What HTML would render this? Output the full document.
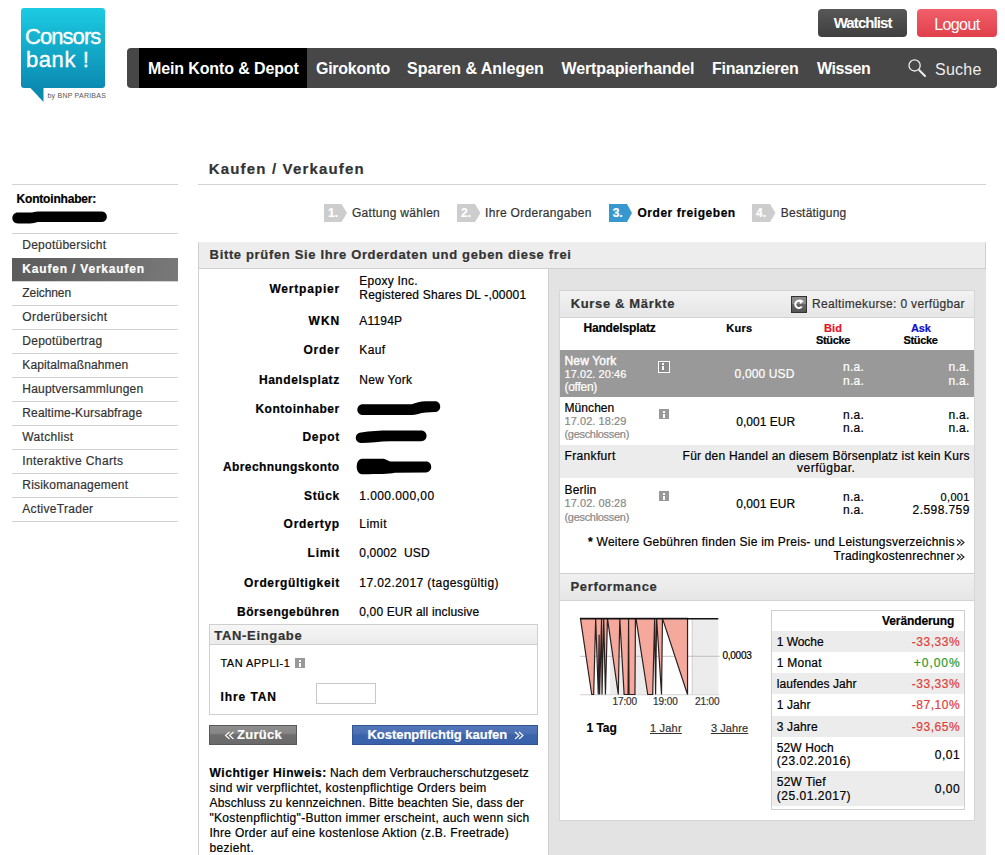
<!DOCTYPE html>
<html><head><meta charset="utf-8"><title>Consorsbank</title>
<style>

html,body{margin:0;padding:0;}
body{width:1005px;height:855px;overflow:hidden;position:relative;background:#fff;font-family:"Liberation Sans",sans-serif;color:#000;}
.t{position:absolute;white-space:nowrap;line-height:1;-webkit-text-stroke:0.2px currentColor;}
.a{position:absolute;}
.ln{position:absolute;height:1px;background:#d3d3d3;}
.badge{position:absolute;top:204px;height:18px;}

</style></head><body>

<!-- logo -->
<div class="a" style="left:21px;top:8px;width:84px;height:80px;border-radius:3px;background:linear-gradient(#1ccbe2,#0b8ab2);"></div>
<svg class="a" style="left:0;top:0" width="120" height="110"><polygon points="30,87.5 43.5,87.5 43.5,102" fill="#0a8ab0"/></svg>

<!-- top buttons -->
<div class="a" style="left:818px;top:9px;width:89px;height:28px;border-radius:4px;background:linear-gradient(#575757,#3f3f3f);"></div>
<div class="a" style="left:917px;top:9px;width:80px;height:28px;border-radius:4px;background:linear-gradient(#f0606a,#e13f4b);"></div>

<!-- nav -->
<div class="a" style="left:127px;top:48px;width:870px;height:40px;border-radius:4px;background:#474747;"></div>
<div class="a" style="left:139px;top:48px;width:168px;height:40px;background:#000;"></div>
<svg class="a" style="left:900px;top:55px" width="30" height="26"><circle cx="14.6" cy="10.4" r="5.6" fill="none" stroke="#eee" stroke-width="1.3"/><line x1="19.3" y1="15.2" x2="25" y2="21" stroke="#eee" stroke-width="2" stroke-linecap="round"/></svg>

<!-- sidebar -->
<div class="ln" style="left:12px;top:184px;width:166px;"></div>
<svg class="a" style="left:0;top:0" width="120" height="240"><path d="M18,212.5 L32,212.5 C35,211.5 37,211.5 40,211.5 L102,211.5 C108.5,211.5 108.5,222 102,222 L38,222 C35,222.5 33,223.4 30,223.4 L18,223.4 C10.5,223.4 10.5,212.5 18,212.5 Z" fill="#000"/></svg>
<div class="ln" style="left:12px;top:233px;width:166px;"></div>
<div class="a" style="left:12px;top:258px;width:166px;height:23px;background:linear-gradient(100deg,#5b5b5b,#797979);"></div>
<div class="ln" style="left:12px;top:281px;width:166px;"></div><div class="ln" style="left:12px;top:305px;width:166px;"></div><div class="ln" style="left:12px;top:329px;width:166px;"></div><div class="ln" style="left:12px;top:353px;width:166px;"></div><div class="ln" style="left:12px;top:377px;width:166px;"></div><div class="ln" style="left:12px;top:401px;width:166px;"></div><div class="ln" style="left:12px;top:425px;width:166px;"></div><div class="ln" style="left:12px;top:449px;width:166px;"></div><div class="ln" style="left:12px;top:473px;width:166px;"></div><div class="ln" style="left:12px;top:497px;width:166px;"></div><div class="ln" style="left:12px;top:521px;width:166px;"></div>

<!-- main header -->
<div class="ln" style="left:198px;top:184px;width:788px;"></div>

<!-- steps -->
<svg class="a" style="left:0;top:0" width="1005" height="240">
<polygon points="324,204 341.5,204 347,213 341.5,222 324,222" fill="#cdcdcd"/>
<polygon points="457,204 475,204 480.5,213 475,222 457,222" fill="#cdcdcd"/>
<polygon points="609,204 627,204 632,213 627,222 609,222" fill="#3797cf"/>
<polygon points="752,204 770,204 775.5,213 770,222 752,222" fill="#cdcdcd"/>
</svg>

<!-- main box -->
<div class="a" style="left:198px;top:242px;width:786px;height:700px;border:1px solid #cfcfcf;border-top-color:#e4e4e4;background:#fff;"></div>
<div class="a" style="left:199px;top:242px;width:786px;height:26px;background:#ededed;border-bottom:1px solid #cfcfcf;"></div>
<div class="a" style="left:548px;top:269px;width:437px;height:600px;background:#e3e3e3;border-left:1px solid #cfcfcf;"></div>

<!-- Kurse panel -->
<div class="a" style="left:559px;top:290px;width:414px;height:529px;border:1px solid #d6d6d6;background:#fff;"></div>
<div class="a" style="left:560px;top:291px;width:414px;height:26px;background:linear-gradient(#f2f2f2,#e6e6e6);border-bottom:1px solid #d3d3d3;"></div>
<div class="a" style="left:560px;top:350px;width:414px;height:47px;background:#999;"></div>
<div class="a" style="left:560px;top:445px;width:414px;height:33px;background:#ececec;"></div>
<!-- performance header -->
<div class="a" style="left:560px;top:573px;width:414px;height:26px;background:linear-gradient(#f0f0f0,#e6e6e6);border-top:1px solid #cfcfcf;border-bottom:1px solid #d3d3d3;"></div>

<!-- refresh icon -->
<div class="a" style="left:791px;top:296px;width:14px;height:15px;border:1px solid #333;background:linear-gradient(#8a8a8a 0%,#8a8a8a 45%,#666 46%,#555 100%);"></div>
<svg class="a" style="left:791px;top:296px" width="16" height="17"><path d="M10.8,10.5 A3.6,3.6 0 1 1 10.2,5.6" fill="none" stroke="#fff" stroke-width="2"/><polygon points="8.5,3 12.8,5.2 9,8" fill="#fff"/></svg>

<!-- info icons -->
<div class="a" style="left:658px;top:361px;width:10px;height:10px;border:1px solid #fff;background:#8c8c8c;"></div>
<div class="a" style="left:662px;top:363px;width:2px;height:2px;background:#fff;"></div>
<div class="a" style="left:662px;top:366px;width:2px;height:4px;background:#fff;"></div>
<div class="a" style="left:659px;top:409px;width:10px;height:10px;background:#999;"></div>
<div class="a" style="left:663px;top:411px;width:2px;height:2px;background:#fff;"></div>
<div class="a" style="left:663px;top:414px;width:2px;height:4px;background:#fff;"></div>
<div class="a" style="left:659px;top:491px;width:10px;height:10px;background:#999;"></div>
<div class="a" style="left:663px;top:493px;width:2px;height:2px;background:#fff;"></div>
<div class="a" style="left:663px;top:496px;width:2px;height:4px;background:#fff;"></div>

<!-- chart -->
<svg class="a" style="left:575px;top:612px" width="150" height="88" viewBox="0 0 1005 590" preserveAspectRatio="none">
<rect x="235" y="45" width="295" height="505" fill="#ececec"/>
<rect x="785" y="45" width="175" height="505" fill="#ececec"/>
<line x1="785" y1="45" x2="785" y2="555" stroke="#c8c8c8" stroke-width="6"/>
<line x1="35" y1="297" x2="970" y2="297" stroke="#bbb" stroke-width="6"/>
<line x1="35" y1="555" x2="965" y2="555" stroke="#ccc" stroke-width="6"/>
<polygon points="36.5,43 112,553 125,553 138.5,43 156,553 161.6,152 165,553 178,43 181,553 192.5,43 204,553 217.5,43 290,553 300,43 329,553 355.6,553 359,43 362,553 401.7,553 405,43 408.6,43 487.5,553 520.4,553 533.6,43 540,553 546.8,43 579.7,553 586,43 754,553 754,43" fill="#f5a99c" stroke="#2a2020" stroke-width="8" stroke-linejoin="miter"/>
<line x1="35" y1="45" x2="960" y2="45" stroke="#111" stroke-width="10"/>
</svg>

<!-- Veraenderung table -->
<div class="a" style="left:771px;top:610px;width:192px;height:198px;border:1px solid #cfcfcf;background:#fff;"></div>
<div class="a" style="left:772px;top:631px;width:192px;height:21px;background:#ececec;"></div>
<div class="a" style="left:772px;top:673px;width:192px;height:21px;background:#ececec;"></div>
<div class="a" style="left:772px;top:716px;width:192px;height:21px;background:#ececec;"></div>
<div class="a" style="left:772px;top:771px;width:192px;height:35px;background:#ececec;"></div>

<!-- redaction blobs -->
<svg class="a" style="left:350px;top:398px" width="100" height="80">
<path d="M13,6.3 L61.6,6.3 C66,5 70,3.3 76,3.3 L85,3.3 C92,3.3 92,14.1 85,14.1 L76,14.5 C70,15 66,17.1 61.6,17.1 L13,17.1 C5.5,17.1 5.5,6.3 13,6.3 Z" fill="#000"/>
<path d="M11,34.6 C20,33 30,32.6 40,32.6 L71,32.6 C78.5,32.6 78.5,43.3 71,43.3 L40,43.3 C30,43.3 20,45.1 11,45.1 C4,45.1 4,34.6 11,34.6 Z" fill="#000"/>
<path d="M12,60.7 L32,60.7 C37,60.7 38,63.6 42,63.6 L76,63.6 C83,63.6 83,74.4 76,74.4 L45,74.8 C38,76 30,76.2 12,76.2 C5,76.2 5,60.7 12,60.7 Z" fill="#000"/>
</svg>
<!-- TAN box -->
<div class="a" style="left:209px;top:624px;width:327px;height:89px;border:1px solid #cfcfcf;background:#fff;"></div>
<div class="a" style="left:210px;top:625px;width:327px;height:19px;background:linear-gradient(#f6f6f6,#ebebeb);border-bottom:1px solid #cfcfcf;"></div>
<div class="a" style="left:295px;top:658px;width:10px;height:10px;background:#999;"></div>
<div class="a" style="left:299px;top:660px;width:2px;height:2px;background:#fff;"></div>
<div class="a" style="left:299px;top:663px;width:2px;height:4px;background:#fff;"></div>
<div class="a" style="left:316px;top:683px;width:58px;height:19px;border:1px solid #c8c8c8;background:#fff;"></div>

<!-- buttons -->
<div class="a" style="left:209px;top:725px;width:86px;height:18px;border:1px solid #585858;background:linear-gradient(#8e8e8e 0%,#868686 40%,#6d6d6d 50%,#6a6a6a 100%);"></div>
<div class="a" style="left:352px;top:725px;width:184px;height:18px;border:1px solid #2f5597;background:linear-gradient(#5276b8 0%,#4c70b3 40%,#3b63ab 50%,#3a62aa 100%);"></div>
<svg class="a" style="left:0;top:0" width="1005" height="855">
<g fill="none" stroke="#fff" stroke-width="1.1">
<polyline points="229.5,732 225.5,735.5 229.5,739"/><polyline points="233.5,732 229.5,735.5 233.5,739"/>
<polyline points="515,732 519,735.5 515,739"/><polyline points="519,732 523,735.5 519,739"/>
</g>
<g fill="none" stroke="#222" stroke-width="1.1">
<polyline points="957,539.5 960.5,542.5 957,545.5"/><polyline points="960.5,539.5 964,542.5 960.5,545.5"/>
<polyline points="957,554 960.5,557 957,560"/><polyline points="960.5,554 964,557 960.5,560"/>
</g>
</svg>

<span id="t0" class="t" style="left:25.00px;top:26.00px;font-size:22px;color:#fff;letter-spacing:-0.937px;-webkit-text-stroke:0.35px #fff;">Consors</span>
<span id="t1" class="t" style="left:26.00px;top:49.00px;font-size:22px;color:#fff;letter-spacing:0.572px;-webkit-text-stroke:0.35px #fff;">bank !</span>
<span id="t2" class="t" style="left:47.50px;top:92.00px;font-size:7px;color:#555;letter-spacing:0.225px;-webkit-text-stroke:0;">by BNP PARIBAS</span>
<span id="t3" class="t" style="left:833.70px;top:15.00px;font-size:15px;font-weight:700;color:#fff;letter-spacing:-0.916px;-webkit-text-stroke:0;">Watchlist</span>
<span id="t4" class="t" style="left:934.30px;top:17.00px;font-size:16px;color:#fff;letter-spacing:-0.628px;-webkit-text-stroke:0;">Logout</span>
<span id="t5" class="t" style="left:148.00px;top:60.50px;font-size:16px;font-weight:700;color:#fff;letter-spacing:-0.122px;-webkit-text-stroke:0;">Mein Konto &amp; Depot</span>
<span id="t6" class="t" style="left:316.00px;top:60.50px;font-size:16px;font-weight:700;color:#fff;letter-spacing:-0.267px;-webkit-text-stroke:0;">Girokonto</span>
<span id="t7" class="t" style="left:407.00px;top:60.50px;font-size:16px;font-weight:700;color:#fff;letter-spacing:-0.028px;-webkit-text-stroke:0;">Sparen &amp; Anlegen</span>
<span id="t8" class="t" style="left:561.60px;top:60.50px;font-size:16px;font-weight:700;color:#fff;letter-spacing:-0.136px;-webkit-text-stroke:0;">Wertpapierhandel</span>
<span id="t9" class="t" style="left:712.00px;top:60.50px;font-size:16px;font-weight:700;color:#fff;letter-spacing:-0.211px;-webkit-text-stroke:0;">Finanzieren</span>
<span id="t10" class="t" style="left:817.00px;top:60.50px;font-size:16px;font-weight:700;color:#fff;letter-spacing:-0.415px;-webkit-text-stroke:0;">Wissen</span>
<span id="t11" class="t" style="left:935.00px;top:62.00px;font-size:16px;color:#eee;letter-spacing:0.231px;-webkit-text-stroke:0;">Suche</span>
<span id="t12" class="t" style="left:16.50px;top:193.00px;font-size:12px;font-weight:700;letter-spacing:-0.183px;">Kontoinhaber:</span>
<span id="t13" class="t" style="left:22.30px;top:239.00px;font-size:12px;color:#333;letter-spacing:0.237px;">Depotübersicht</span>
<span id="t14" class="t" style="left:22.30px;top:263.00px;font-size:12px;font-weight:700;color:#fff;letter-spacing:0.809px;">Kaufen / Verkaufen</span>
<span id="t15" class="t" style="left:22.30px;top:287.00px;font-size:12px;color:#333;letter-spacing:-0.082px;">Zeichnen</span>
<span id="t16" class="t" style="left:22.30px;top:311.00px;font-size:12px;color:#333;letter-spacing:0.417px;">Orderübersicht</span>
<span id="t17" class="t" style="left:22.30px;top:335.00px;font-size:12px;color:#333;letter-spacing:0.257px;">Depotübertrag</span>
<span id="t18" class="t" style="left:22.30px;top:359.00px;font-size:12px;color:#333;letter-spacing:0.116px;">Kapitalmaßnahmen</span>
<span id="t19" class="t" style="left:22.30px;top:383.00px;font-size:12px;color:#333;letter-spacing:0.200px;">Hauptversammlungen</span>
<span id="t20" class="t" style="left:22.30px;top:407.00px;font-size:12px;color:#333;letter-spacing:0.162px;">Realtime-Kursabfrage</span>
<span id="t21" class="t" style="left:22.30px;top:431.00px;font-size:12px;color:#333;letter-spacing:0.321px;">Watchlist</span>
<span id="t22" class="t" style="left:22.30px;top:455.00px;font-size:12px;color:#333;letter-spacing:0.397px;">Interaktive Charts</span>
<span id="t23" class="t" style="left:22.30px;top:479.00px;font-size:12px;color:#333;letter-spacing:0.205px;">Risikomanagement</span>
<span id="t24" class="t" style="left:22.30px;top:503.00px;font-size:12px;color:#333;letter-spacing:0.293px;">ActiveTrader</span>
<span id="t25" class="t" style="left:208.80px;top:161.00px;font-size:15px;font-weight:700;color:#333;letter-spacing:1.162px;">Kaufen / Verkaufen</span>
<span id="t26" class="t" style="left:328.00px;top:207.00px;font-size:12px;font-weight:700;color:#fff;">1.</span>
<span id="t27" class="t" style="left:352.00px;top:207.00px;font-size:12px;color:#333;letter-spacing:0.287px;">Gattung wählen</span>
<span id="t28" class="t" style="left:461.00px;top:207.00px;font-size:12px;font-weight:700;color:#fff;">2.</span>
<span id="t29" class="t" style="left:485.00px;top:207.00px;font-size:12px;color:#333;letter-spacing:0.312px;">Ihre Orderangaben</span>
<span id="t30" class="t" style="left:612.70px;top:207.00px;font-size:12px;font-weight:700;color:#fff;">3.</span>
<span id="t31" class="t" style="left:637.40px;top:207.00px;font-size:12px;font-weight:700;letter-spacing:0.555px;">Order freigeben</span>
<span id="t32" class="t" style="left:756.00px;top:207.00px;font-size:12px;font-weight:700;color:#fff;">4.</span>
<span id="t33" class="t" style="left:780.80px;top:207.00px;font-size:12px;color:#333;letter-spacing:0.211px;">Bestätigung</span>
<span id="t34" class="t" style="left:209.60px;top:248.00px;font-size:13px;font-weight:700;color:#333;letter-spacing:0.655px;">Bitte prüfen Sie Ihre Orderdaten und geben diese frei</span>
<span id="t35" class="t" style="left:269.40px;top:282.50px;font-size:12px;font-weight:700;letter-spacing:0.815px;">Wertpapier</span>
<span id="t36" class="t" style="left:308.60px;top:315.30px;font-size:12px;font-weight:700;letter-spacing:0.964px;">WKN</span>
<span id="t37" class="t" style="left:303.40px;top:344.30px;font-size:12px;font-weight:700;letter-spacing:0.778px;">Order</span>
<span id="t38" class="t" style="left:258.90px;top:373.60px;font-size:12px;font-weight:700;letter-spacing:0.571px;">Handelsplatz</span>
<span id="t39" class="t" style="left:255.40px;top:402.60px;font-size:12px;font-weight:700;letter-spacing:0.527px;">Kontoinhaber</span>
<span id="t40" class="t" style="left:302.40px;top:431.20px;font-size:12px;font-weight:700;letter-spacing:0.700px;">Depot</span>
<span id="t41" class="t" style="left:222.90px;top:460.90px;font-size:12px;font-weight:700;letter-spacing:0.420px;">Abrechnungskonto</span>
<span id="t42" class="t" style="left:304.10px;top:489.50px;font-size:12px;font-weight:700;letter-spacing:0.603px;">Stück</span>
<span id="t43" class="t" style="left:283.60px;top:518.30px;font-size:12px;font-weight:700;letter-spacing:0.702px;">Ordertyp</span>
<span id="t44" class="t" style="left:307.60px;top:547.20px;font-size:12px;font-weight:700;letter-spacing:0.732px;">Limit</span>
<span id="t45" class="t" style="left:244.10px;top:576.60px;font-size:12px;font-weight:700;letter-spacing:0.649px;">Ordergültigkeit</span>
<span id="t46" class="t" style="left:237.00px;top:605.50px;font-size:12px;font-weight:700;letter-spacing:0.476px;">Börsengebühren</span>
<span id="t47" class="t" style="left:359.30px;top:275.40px;font-size:12px;letter-spacing:0.252px;">Epoxy Inc.</span>
<span id="t48" class="t" style="left:359.30px;top:288.90px;font-size:12px;letter-spacing:0.191px;">Registered Shares DL -,00001</span>
<span id="t49" class="t" style="left:359.30px;top:315.30px;font-size:12px;letter-spacing:0.197px;">A1194P</span>
<span id="t50" class="t" style="left:359.30px;top:344.30px;font-size:12px;letter-spacing:0.371px;">Kauf</span>
<span id="t51" class="t" style="left:359.30px;top:373.60px;font-size:12px;letter-spacing:0.300px;">New York</span>
<span id="t52" class="t" style="left:359.30px;top:489.50px;font-size:12px;letter-spacing:0.429px;">1.000.000,00</span>
<span id="t53" class="t" style="left:359.30px;top:518.30px;font-size:12px;letter-spacing:0.464px;">Limit</span>
<span id="t54" class="t" style="left:359.30px;top:547.20px;font-size:12px;letter-spacing:0.158px;">0,0002&nbsp; USD</span>
<span id="t55" class="t" style="left:359.30px;top:576.60px;font-size:12px;letter-spacing:0.424px;">17.02.2017 (tagesgültig)</span>
<span id="t56" class="t" style="left:359.30px;top:605.50px;font-size:12px;letter-spacing:0.147px;">0,00 EUR all inclusive</span>
<span id="t57" class="t" style="left:214.30px;top:629.00px;font-size:13px;font-weight:700;color:#333;letter-spacing:0.674px;">TAN-Eingabe</span>
<span id="t58" class="t" style="left:220.50px;top:658.00px;font-size:11px;letter-spacing:0.469px;">TAN APPLI-1</span>
<span id="t59" class="t" style="left:220.50px;top:691.00px;font-size:12px;font-weight:700;letter-spacing:0.911px;">Ihre TAN</span>
<span id="t60" class="t" style="left:237.00px;top:728.00px;font-size:13px;font-weight:700;color:#fff;letter-spacing:0.291px;">Zurück</span>
<span id="t61" class="t" style="left:367.40px;top:728.00px;font-size:13px;font-weight:700;color:#fff;letter-spacing:-0.015px;">Kostenpflichtig kaufen</span>
<span id="t62" class="t" style="left:209.50px;top:766.50px;font-size:12px;font-weight:700;letter-spacing:0.562px;">Wichtiger Hinweis:</span>
<span id="t63" class="t" style="left:330.00px;top:766.50px;font-size:12px;letter-spacing:0.173px;">Nach dem Verbraucherschutzgesetz</span>
<span id="t64" class="t" style="left:209.50px;top:781.50px;font-size:12px;letter-spacing:0.322px;">sind wir verpflichtet, kostenpflichtige Orders beim</span>
<span id="t65" class="t" style="left:209.50px;top:796.50px;font-size:12px;letter-spacing:0.175px;">Abschluss zu kennzeichnen. Bitte beachten Sie, dass der</span>
<span id="t66" class="t" style="left:209.50px;top:811.50px;font-size:12px;letter-spacing:0.299px;">"Kostenpflichtig"-Button immer erscheint, auch wenn sich</span>
<span id="t67" class="t" style="left:209.50px;top:826.50px;font-size:12px;letter-spacing:0.273px;">Ihre Order auf eine kostenlose Aktion (z.B. Freetrade)</span>
<span id="t68" class="t" style="left:209.50px;top:841.50px;font-size:12px;letter-spacing:0.324px;">bezieht.</span>
<span id="t69" class="t" style="left:570.70px;top:297.00px;font-size:13px;font-weight:700;color:#333;letter-spacing:0.648px;">Kurse &amp; Märkte</span>
<span id="t70" class="t" style="left:812.00px;top:297.50px;font-size:12px;color:#333;letter-spacing:0.337px;">Realtimekurse: 0 verfügbar</span>
<span id="t71" class="t" style="left:583.40px;top:322.00px;font-size:12px;font-weight:700;letter-spacing:-0.147px;">Handelsplatz</span>
<span id="t72" class="t" style="left:726.30px;top:323.00px;font-size:11px;font-weight:700;letter-spacing:0.246px;">Kurs</span>
<span id="t73" class="t" style="left:824.10px;top:323.00px;font-size:11px;font-weight:700;color:#e4141e;letter-spacing:0.033px;">Bid</span>
<span id="t74" class="t" style="left:816.00px;top:334.70px;font-size:11px;font-weight:700;letter-spacing:-0.336px;">Stücke</span>
<span id="t75" class="t" style="left:911.10px;top:323.00px;font-size:11px;font-weight:700;color:#1111cc;letter-spacing:-0.194px;">Ask</span>
<span id="t76" class="t" style="left:903.50px;top:334.70px;font-size:11px;font-weight:700;letter-spacing:-0.336px;">Stücke</span>
<span id="t77" class="t" style="left:564.50px;top:355.00px;font-size:12px;color:#fff;letter-spacing:0.157px;-webkit-text-stroke:0.4px #fff;">New York</span>
<span id="t78" class="t" style="left:564.50px;top:369.30px;font-size:11px;color:#fff;letter-spacing:0.057px;">17.02. 20:46</span>
<span id="t79" class="t" style="left:564.50px;top:381.00px;font-size:12px;color:#fff;letter-spacing:-0.278px;">(offen)</span>
<span id="t80" class="t" style="left:734.60px;top:368.00px;font-size:12px;color:#fff;letter-spacing:0.137px;">0,000 USD</span>
<span id="t81" class="t" style="left:843.00px;top:361.00px;font-size:12px;color:#fff;letter-spacing:0.261px;">n.a.</span>
<span id="t82" class="t" style="left:843.00px;top:374.60px;font-size:12px;color:#fff;letter-spacing:0.261px;">n.a.</span>
<span id="t83" class="t" style="left:948.60px;top:361.00px;font-size:12px;color:#fff;letter-spacing:0.261px;">n.a.</span>
<span id="t84" class="t" style="left:948.60px;top:374.60px;font-size:12px;color:#fff;letter-spacing:0.261px;">n.a.</span>
<span id="t85" class="t" style="left:564.50px;top:401.80px;font-size:12px;letter-spacing:0.071px;">München</span>
<span id="t86" class="t" style="left:564.50px;top:415.80px;font-size:11px;color:#888;letter-spacing:0.057px;">17.02. 18:29</span>
<span id="t87" class="t" style="left:564.50px;top:429.00px;font-size:11px;color:#888;letter-spacing:-0.307px;">(geschlossen)</span>
<span id="t88" class="t" style="left:736.30px;top:415.70px;font-size:12px;letter-spacing:0.012px;">0,001 EUR</span>
<span id="t89" class="t" style="left:843.00px;top:409.00px;font-size:12px;letter-spacing:0.261px;">n.a.</span>
<span id="t90" class="t" style="left:843.00px;top:421.50px;font-size:12px;letter-spacing:0.261px;">n.a.</span>
<span id="t91" class="t" style="left:948.60px;top:409.00px;font-size:12px;letter-spacing:0.261px;">n.a.</span>
<span id="t92" class="t" style="left:948.60px;top:421.50px;font-size:12px;letter-spacing:0.261px;">n.a.</span>
<span id="t93" class="t" style="left:564.50px;top:450.00px;font-size:12px;letter-spacing:0.348px;">Frankfurt</span>
<span id="t94" class="t" style="left:682.60px;top:450.00px;font-size:12px;letter-spacing:0.204px;">Für den Handel an diesem Börsenplatz ist kein Kurs</span>
<span id="t95" class="t" style="left:797.10px;top:462.00px;font-size:12px;letter-spacing:0.492px;">verfügbar.</span>
<span id="t96" class="t" style="left:564.50px;top:484.30px;font-size:12px;letter-spacing:0.223px;">Berlin</span>
<span id="t97" class="t" style="left:564.50px;top:498.30px;font-size:11px;color:#888;letter-spacing:0.057px;">17.02. 08:28</span>
<span id="t98" class="t" style="left:564.50px;top:511.50px;font-size:11px;color:#888;letter-spacing:-0.307px;">(geschlossen)</span>
<span id="t99" class="t" style="left:736.30px;top:498.00px;font-size:12px;letter-spacing:0.012px;">0,001 EUR</span>
<span id="t100" class="t" style="left:843.00px;top:491.00px;font-size:12px;letter-spacing:0.261px;">n.a.</span>
<span id="t101" class="t" style="left:843.00px;top:504.00px;font-size:12px;letter-spacing:0.261px;">n.a.</span>
<span id="t102" class="t" style="left:940.60px;top:492.00px;font-size:11px;letter-spacing:0.317px;">0,001</span>
<span id="t103" class="t" style="left:912.60px;top:504.00px;font-size:12px;letter-spacing:0.426px;">2.598.759</span>
<span id="t104" class="t" style="left:588.10px;top:535.80px;font-size:12px;letter-spacing:0.238px;"><b>*</b> Weitere Gebühren finden Sie im Preis- und Leistungsverzeichnis</span>
<span id="t105" class="t" style="left:833.60px;top:550.00px;font-size:12px;letter-spacing:0.237px;">Tradingkostenrechner</span>
<span id="t106" class="t" style="left:570.40px;top:580.00px;font-size:13px;font-weight:700;color:#333;letter-spacing:0.692px;">Performance</span>
<span id="t107" class="t" style="left:722.50px;top:651.00px;font-size:10px;letter-spacing:-0.259px;">0,0003</span>
<span id="t108" class="t" style="left:612.40px;top:696.50px;font-size:10px;color:#333;letter-spacing:-0.058px;">17:00</span>
<span id="t109" class="t" style="left:653.10px;top:696.50px;font-size:10px;color:#333;letter-spacing:-0.058px;">19:00</span>
<span id="t110" class="t" style="left:694.90px;top:696.50px;font-size:10px;color:#333;letter-spacing:-0.058px;">21:00</span>
<span id="t111" class="t" style="left:586.50px;top:722.00px;font-size:12px;font-weight:700;letter-spacing:-0.038px;">1 Tag</span>
<span id="t112" class="t" style="left:650.00px;top:723.00px;font-size:11px;color:#333;letter-spacing:0.204px;text-decoration:underline;">1 Jahr</span>
<span id="t113" class="t" style="left:710.90px;top:723.00px;font-size:11px;color:#333;letter-spacing:0.099px;text-decoration:underline;">3 Jahre</span>
<span id="t114" class="t" style="left:882.00px;top:615.00px;font-size:12px;font-weight:700;letter-spacing:-0.096px;">Veränderung</span>
<span id="t115" class="t" style="left:776.80px;top:636.00px;font-size:12px;letter-spacing:-0.057px;">1 Woche</span>
<span id="t116" class="t" style="left:911.80px;top:636.00px;font-size:12px;color:#e0403a;letter-spacing:0.516px;">-33,33%</span>
<span id="t117" class="t" style="left:776.80px;top:657.00px;font-size:12px;letter-spacing:0.240px;">1 Monat</span>
<span id="t118" class="t" style="left:913.80px;top:657.00px;font-size:12px;color:#2e9a2e;letter-spacing:0.951px;">+0,00%</span>
<span id="t119" class="t" style="left:776.80px;top:678.00px;font-size:12px;letter-spacing:0.082px;">laufendes Jahr</span>
<span id="t120" class="t" style="left:911.80px;top:678.00px;font-size:12px;color:#e0403a;letter-spacing:0.516px;">-33,33%</span>
<span id="t121" class="t" style="left:776.80px;top:699.00px;font-size:12px;letter-spacing:0.088px;">1 Jahr</span>
<span id="t122" class="t" style="left:911.80px;top:699.00px;font-size:12px;color:#e0403a;letter-spacing:0.516px;">-87,10%</span>
<span id="t123" class="t" style="left:776.80px;top:720.60px;font-size:12px;letter-spacing:0.128px;">3 Jahre</span>
<span id="t124" class="t" style="left:911.80px;top:720.60px;font-size:12px;color:#e0403a;letter-spacing:0.516px;">-93,65%</span>
<span id="t125" class="t" style="left:776.80px;top:742.00px;font-size:12px;letter-spacing:0.110px;">52W Hoch</span>
<span id="t126" class="t" style="left:776.80px;top:754.80px;font-size:12px;letter-spacing:0.522px;">(23.02.2016)</span>
<span id="t127" class="t" style="left:934.80px;top:748.80px;font-size:12px;letter-spacing:0.480px;">0,01</span>
<span id="t128" class="t" style="left:776.80px;top:775.70px;font-size:12px;letter-spacing:0.206px;">52W Tief</span>
<span id="t129" class="t" style="left:776.80px;top:789.50px;font-size:12px;letter-spacing:0.522px;">(25.01.2017)</span>
<span id="t130" class="t" style="left:934.80px;top:782.80px;font-size:12px;letter-spacing:0.480px;">0,00</span>
</body></html>
